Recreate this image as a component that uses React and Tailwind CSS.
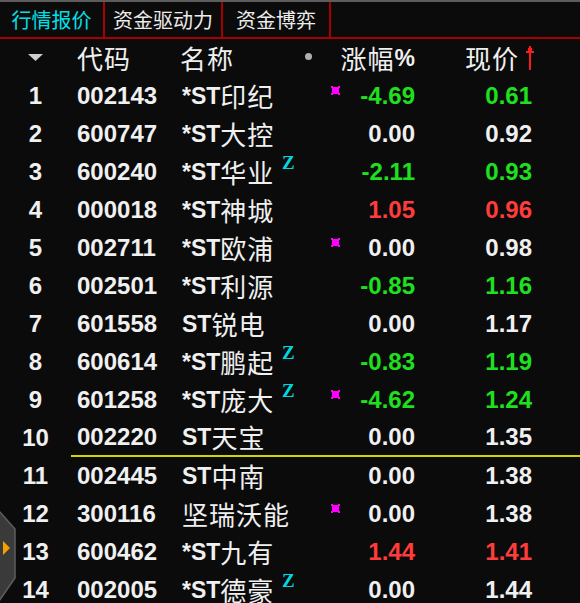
import React from "react";

const rows = [
  ["1", "002143", "*ST", "印纪", false, true, "-4.69", "0.61", "g"],
  ["2", "600747", "*ST", "大控", false, false, "0.00", "0.92", "w"],
  ["3", "600240", "*ST", "华业", true, false, "-2.11", "0.93", "g"],
  ["4", "000018", "*ST", "神城", false, false, "1.05", "0.96", "r"],
  ["5", "002711", "*ST", "欧浦", false, true, "0.00", "0.98", "w"],
  ["6", "002501", "*ST", "利源", false, false, "-0.85", "1.16", "g"],
  ["7", "601558", "ST", "锐电", false, false, "0.00", "1.17", "w"],
  ["8", "600614", "*ST", "鹏起", true, false, "-0.83", "1.19", "g"],
  ["9", "601258", "*ST", "庞大", true, true, "-4.62", "1.24", "g"],
  ["10", "002220", "ST", "天宝", false, false, "0.00", "1.35", "w"],
  ["11", "002445", "ST", "中南", false, false, "0.00", "1.38", "w"],
  ["12", "300116", "", "坚瑞沃能", false, true, "0.00", "1.38", "w"],
  ["13", "600462", "*ST", "九有", false, false, "1.44", "1.41", "r"],
  ["14", "002005", "*ST", "德豪", true, false, "0.00", "1.44", "w"],
];

const colorCls = {
  g: "text-[#1fe01f]",
  w: "text-[#f0f0f0]",
  r: "text-[#ff3c3c]",
};

function Mag() {
  return (
    <svg width="11" height="11" viewBox="0 0 11 11">
      <rect x="2" y="2" width="7" height="7" fill="#ff00ff" />
      <rect x="1" y="1" width="2" height="2" fill="#ff00ff" />
      <rect x="8" y="1" width="2" height="2" fill="#ff00ff" />
      <rect x="1" y="8" width="2" height="2" fill="#ff00ff" />
      <rect x="8" y="8" width="2" height="2" fill="#ff00ff" />
    </svg>
  );
}

const num = "font-['Liberation_Sans',sans-serif] font-bold text-[24px] leading-none";
const cjk = "font-['Noto_Sans_CJK_SC',sans-serif] text-[26px] leading-none tracking-[1px]";

export default function App() {
  return (
    <div className="relative w-[580px] h-[603px] overflow-hidden bg-[#0b0b0b] select-none">
      <div className="h-[2px] bg-[#5c5c5c]" />
      <div className="h-[37px] flex border-b-2 border-[#a80000] font-['Noto_Sans_CJK_SC',sans-serif] text-[20px] leading-none">
        <div className="w-[105px] border-r-2 border-[#a80000] flex items-center justify-center text-[#00e0e8]">行情报价</div>
        <div className="w-[118px] border-r-2 border-[#a80000] flex items-center justify-center text-[#ececec]">资金驱动力</div>
        <div className="w-[108px] border-r-2 border-[#a80000] flex items-center justify-center text-[#ececec]">资金博弈</div>
      </div>
      {/* header */}
      <div className="h-[38px] flex items-center text-[#f0f0f0]">
        <div className="w-[71px] flex justify-center">
          <svg width="15" height="8" viewBox="0 0 15 8">
            <polygon points="0,0 15,0 7.5,7" fill="#cfcfcf" />
          </svg>
        </div>
        <div className={`w-[109px] pl-[6px] ${cjk} tracking-[0px]`}>代码</div>
        <div className={`w-[142px] relative ${cjk} tracking-[0px]`}>
          名称
          <span className="absolute left-[125px] top-[8px] w-[7px] h-[7px] rounded-full bg-[#b0b0b0]" />
        </div>
        <div className="w-[93px] flex justify-end items-center">
          <span className={`${cjk} tracking-[0px]`}>涨幅</span>
          <span className="font-['Liberation_Sans',sans-serif] font-bold text-[23px] leading-none">%</span>
        </div>
        <div className="w-[120px] flex justify-end items-center">
          <span className={`${cjk} tracking-[0px]`}>现价</span>
          <svg width="10" height="24" viewBox="0 0 10 24" className="ml-[6px]">
            <rect x="4" y="0" width="2" height="24" fill="#ff1a1a" />
            <rect x="1" y="5" width="8" height="2" fill="#ff1a1a" />
            <rect x="3" y="2" width="4" height="3" fill="#ff1a1a" />
          </svg>
        </div>
      </div>
      {rows.map(([idx, code, pre, name, z, mag, chg, price, c], i) => (
        <div key={idx} className="h-[38px] flex text-[#f0f0f0]">
          <div className={`w-[71px] flex items-center justify-center ${num}`}>{idx}</div>
          <div className={`flex-1 flex items-center ${i === 9 ? "border-b-2 border-[#d4d400]" : ""}`}>
            <div className={`w-[111px] pl-[6px] ${num}`}>{code}</div>
            <div className="w-[140px] relative flex items-center h-full">
              {pre && (
                <span className="font-['Liberation_Sans',sans-serif] font-bold text-[23px] leading-none">{pre}</span>
              )}
              <span className={cjk}>{name}</span>
              {z && (
                <span className="absolute left-[100px] top-[0px] font-['Liberation_Serif',serif] font-bold text-[19px] leading-none text-[#00d8e0]">
                  Z
                </span>
              )}
            </div>
            <div className="w-[20px] h-full relative">
              {mag && (
                <div className="absolute left-[8px] top-[8px]">
                  <Mag />
                </div>
              )}
            </div>
            <div className={`w-[73px] text-right ${num} ${colorCls[c]}`}>{chg}</div>
            <div className={`w-[117px] text-right ${num} ${colorCls[c]}`}>{price}</div>
          </div>
        </div>
      ))}
      {/* side handle */}
      <svg className="absolute left-0 top-[510px]" width="17" height="93" viewBox="0 0 17 93">
        <polygon points="-1,1 15,19 15,68 -1,91" fill="#3a3a3a" stroke="#5e5e5e" strokeWidth="1.5" />
        <polygon points="3,31 10,38 3,45" fill="#f5a000" />
      </svg>
    </div>
  );
}
